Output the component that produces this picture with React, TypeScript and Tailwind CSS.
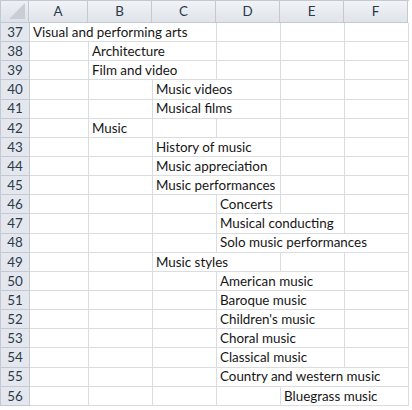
import React from "react";

type Entry = { row: number; col: number; span: number; text: string };

const entries: Entry[] = [
  { row: 37, col: 0, span: 3, text: "Visual and performing arts" },
  { row: 38, col: 1, span: 2, text: "Architecture" },
  { row: 39, col: 1, span: 2, text: "Film and video" },
  { row: 40, col: 2, span: 2, text: "Music videos" },
  { row: 41, col: 2, span: 2, text: "Musical films" },
  { row: 42, col: 1, span: 1, text: "Music" },
  { row: 43, col: 2, span: 2, text: "History of music" },
  { row: 44, col: 2, span: 2, text: "Music appreciation" },
  { row: 45, col: 2, span: 2, text: "Music performances" },
  { row: 46, col: 3, span: 1, text: "Concerts" },
  { row: 47, col: 3, span: 2, text: "Musical conducting" },
  { row: 48, col: 3, span: 3, text: "Solo music performances" },
  { row: 49, col: 2, span: 2, text: "Music styles" },
  { row: 50, col: 3, span: 2, text: "American music" },
  { row: 51, col: 3, span: 2, text: "Baroque music" },
  { row: 52, col: 3, span: 2, text: "Children's music" },
  { row: 53, col: 3, span: 2, text: "Choral music" },
  { row: 54, col: 3, span: 2, text: "Classical music" },
  { row: 55, col: 3, span: 3, text: "Country and western music" },
  { row: 56, col: 4, span: 2, text: "Bluegrass music" },
];

const widths = [59, 64, 64, 64, 64, 64];
const letters = ["A", "B", "C", "D", "E", "F"];

function Row({ e }: { e: Entry }) {
  const cells: React.ReactNode[] = [];
  let c = 0;
  while (c < 6) {
    if (c === e.col) {
      const w = widths.slice(c, c + e.span).reduce((a, b) => a + b, 0);
      cells.push(
        <div
          key={c}
          style={{ width: w }}
          className="h-full shrink-0 border-r border-b border-[#dadcdf] flex items-center pl-[3px] pt-[1px] whitespace-nowrap overflow-visible text-[#161616]"
        >
          {e.text}
        </div>
      );
      c += e.span;
    } else {
      cells.push(
        <div
          key={c}
          style={{ width: widths[c] }}
          className="h-full shrink-0 border-r border-b border-[#dadcdf]"
        />
      );
      c += 1;
    }
  }
  return (
    <div className="flex h-[19.15px]">
      <div className="w-[29px] h-full shrink-0 bg-[#e4e8ee] border-r border-b border-[#c3c9d2] flex items-center justify-center text-[#2b3a4a] pt-[1px]">
        {e.row}
      </div>
      {cells}
    </div>
  );
}

export default function App() {
  return (
    <div
      className="w-[412px] h-[410px] bg-white overflow-hidden text-[13.4px] leading-none"
      style={{ fontFamily: "Lato, 'Open Sans', sans-serif" }}
    >
      <div className="w-[409px] border-l border-t border-[#c3c9d2]">
        <div className="flex h-[22px]">
          <div className="w-[28px] h-full shrink-0 bg-gradient-to-b from-[#edf0f4] to-[#dde2e9] border-r border-b border-[#c3c9d2] relative">
            <div className="absolute right-[3px] bottom-[3px] w-0 h-0 border-l-[16px] border-l-transparent border-b-[16px] border-b-[#c9ced6]" />
          </div>
          {letters.map((l, i) => (
            <div
              key={l}
              style={{ width: widths[i] }}
              className="h-full shrink-0 bg-gradient-to-b from-[#f1f3f6] to-[#dfe4ea] border-r border-b border-[#c3c9d2] flex items-center justify-center text-[#2b3a4a] pt-[1px]"
            >
              {l}
            </div>
          ))}
        </div>
        {entries.map((e) => (
          <Row key={e.row} e={e} />
        ))}
      </div>
    </div>
  );
}
